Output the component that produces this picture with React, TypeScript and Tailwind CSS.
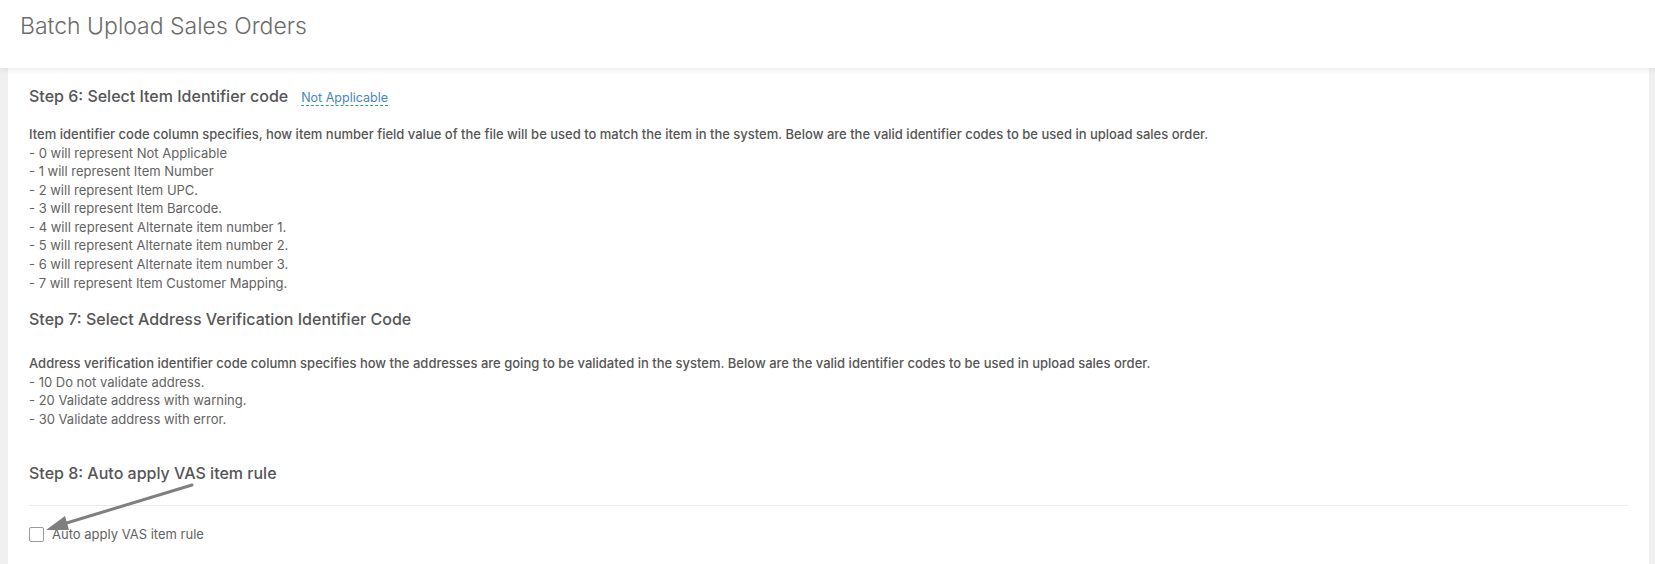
import React from 'react'

const itemCodes = [
    "- 0 will represent Not Applicable",
    "- 1 will represent Item Number",
    "- 2 will represent Item UPC.",
    "- 3 will represent Item Barcode.",
    "- 4 will represent Alternate item number 1.",
    "- 5 will represent Alternate item number 2.",
    "- 6 will represent Alternate item number 3.",
    "- 7 will represent Item Customer Mapping.",
]

const addressCodes = [
    "- 10 Do not validate address.",
    "- 20 Validate address with warning.",
    "- 30 Validate address with error.",
]

export default function App() {
  return (
    <div className='min-h-[564px] bg-[#f0f0f0] flex flex-col' style={{ fontFamily: 'Inter, "Open Sans", sans-serif' }}>
        <div className='h-[68px] bg-white flex items-center px-5 shadow-[0_2px_6px_rgba(0,0,0,0.08)] relative z-10'>
            <h1 className='text-[23px] font-light text-[#6b6b6b] leading-none -mt-[16px]'>Batch Upload Sales Orders</h1>
        </div>
        <div className='flex-1 ml-2 mr-[6px] bg-white px-[21px] pt-[17px] text-[13px] leading-[18.57px] text-[#626262] relative'>
            <div className='flex flex-row items-center gap-[13px] h-[22px]'>
                <p className='text-[16px] font-medium text-[#555]'>Step 6: Select Item Identifier code</p>
                <span className='text-[12.5px] text-[#4a84c6] border-b border-dashed border-[#2aa38a] leading-[15px] mt-[3px]'>Not Applicable</span>
            </div>
            <div className='mt-[18px]'>
                <p className='font-medium text-[#555]'>Item identifier code column specifies, how item number field value of the file will be used to match the item in the system. Below are the valid identifier codes to be used in upload sales order.</p>
                {itemCodes.map((line, i) => (
                    <p key={i}>{line}</p>
                ))}
            </div>
            <p className='mt-[16px] text-[16px] leading-[22px] font-medium text-[#555]'>Step 7: Select Address Verification Identifier Code</p>
            <div className='mt-[24px]'>
                <p className='font-medium text-[#555]'>Address verification identifier code column specifies how the addresses are going to be validated in the system. Below are the valid identifier codes to be used in upload sales order.</p>
                {addressCodes.map((line, i) => (
                    <p key={i}>{line}</p>
                ))}
            </div>
            <p className='mt-[34px] text-[16px] leading-[22px] font-medium text-[#555]'>Step 8: Auto apply VAS item rule</p>
            <div className='mt-[21px] border-t border-[#ebebeb]'></div>
            <label className='mt-[19px] flex flex-row items-center gap-[8px]'>
                <span className='w-[15px] h-[15px] border border-[#9a9a9a] rounded-[2px] bg-white'></span>
                <span>Auto apply VAS item rule</span>
            </label>
            {/* annotation arrow */}
            <svg className='absolute left-0 top-0 pointer-events-none' width='220' height='500' viewBox='0 0 220 500'>
                <line x1='184' y1='417' x2='52' y2='457' stroke='#7f7f7f' strokeWidth='3' strokeLinecap='round' />
                <polygon points='38,462 57,448 61,462' fill='#7f7f7f' />
            </svg>
        </div>
    </div>
  )
}
